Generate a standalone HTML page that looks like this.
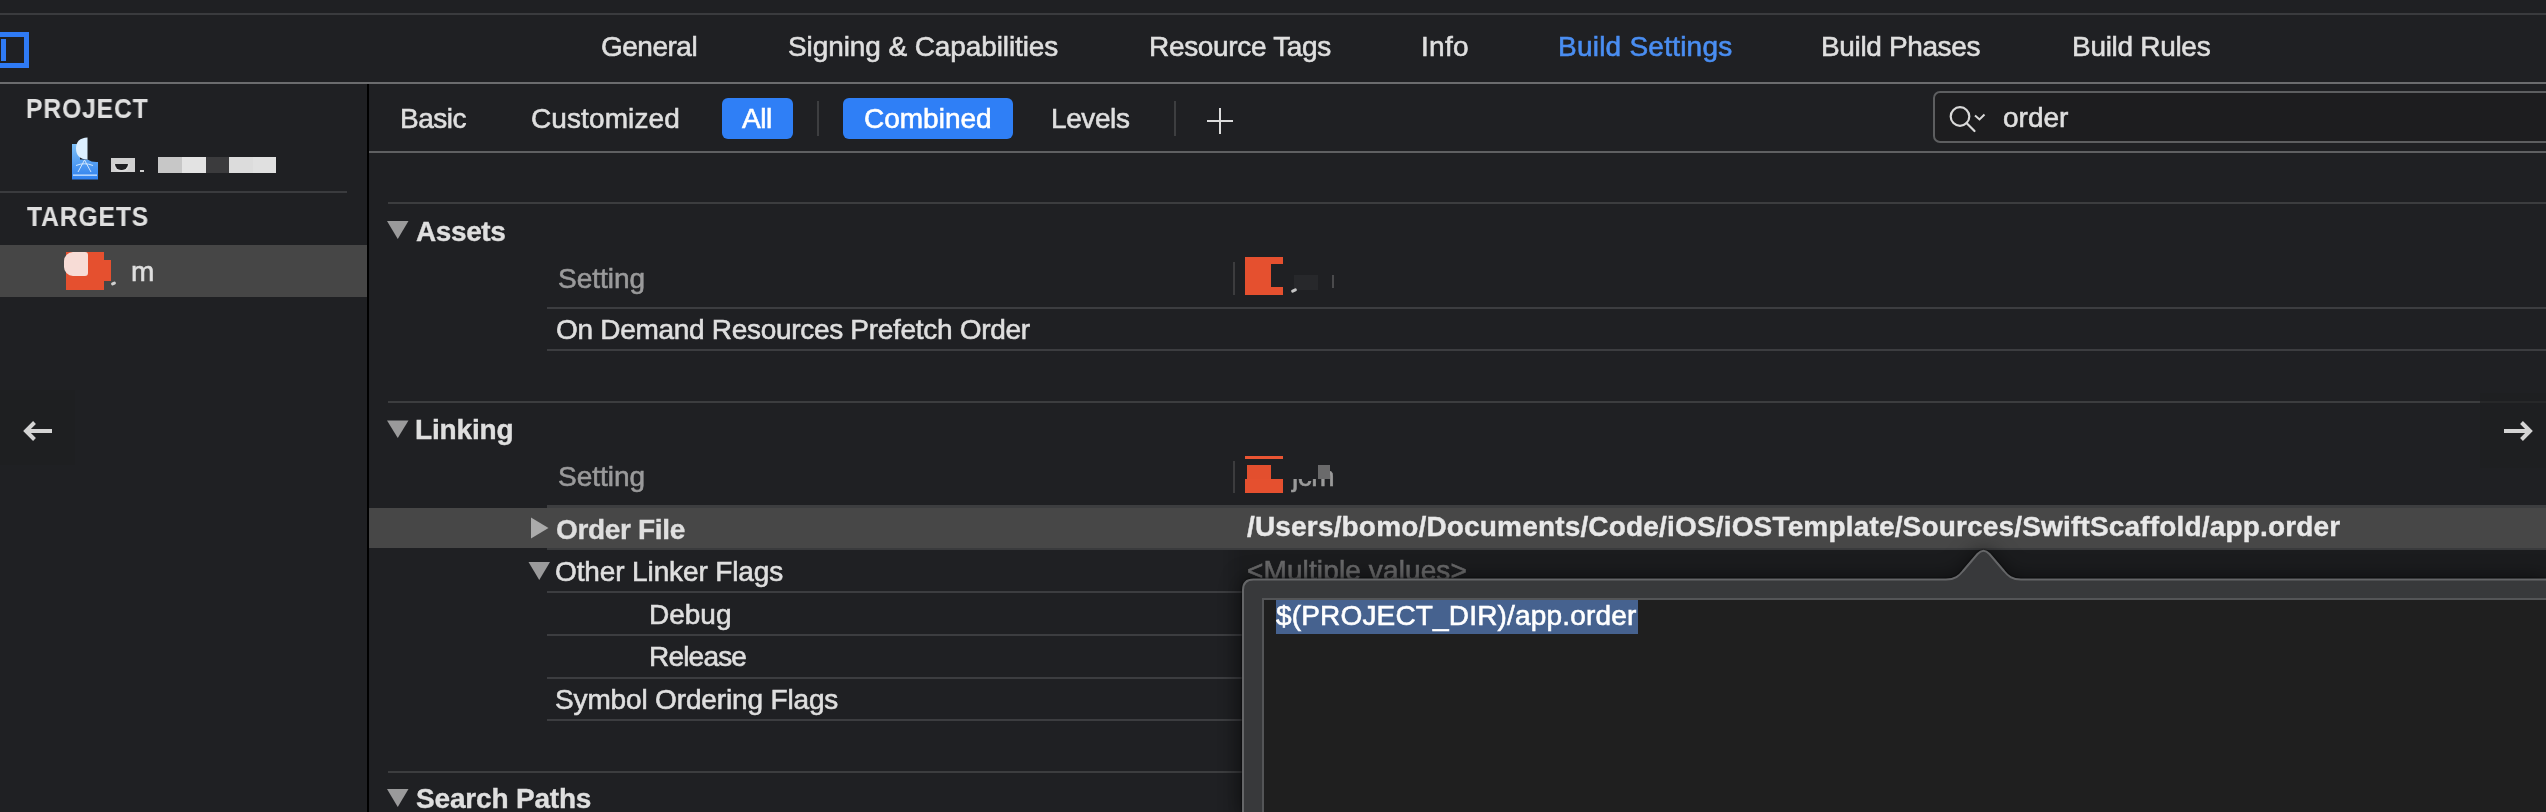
<!DOCTYPE html>
<html><head><meta charset="utf-8">
<style>
html,body{margin:0;padding:0;}
body{width:2546px;height:812px;overflow:hidden;background:#1f2023;position:relative;font-family:"Liberation Sans",sans-serif;}
.a{position:absolute;}
.t{position:absolute;font-size:28px;line-height:28px;white-space:pre;color:#dfdfdf;will-change:transform;-webkit-text-stroke:0.6px currentColor;}
.b{-webkit-text-stroke:0.4px currentColor;}
.t.b{font-weight:700;}
.ln{position:absolute;height:2px;}
</style></head><body>
<!-- top line -->
<div class="ln" style="left:0;top:13px;width:2546px;background:#3a3b3e"></div>
<!-- blue sidebar icon -->
<div class="a" style="left:-5px;top:32px;width:24px;height:26px;border:5px solid #2f7bf5"></div>
<div class="a" style="left:1px;top:39px;width:5px;height:22px;background:#2f7bf5"></div>

<!-- tabs -->
<div class="t" style="left:601px;top:33px;letter-spacing:-0.5px">General</div>
<div class="t" style="left:788px;top:33px;letter-spacing:-0.1px">Signing &amp; Capabilities</div>
<div class="t" style="left:1149px;top:33px;letter-spacing:-0.33px">Resource Tags</div>
<div class="t" style="left:1421px;top:33px;letter-spacing:0.33px">Info</div>
<div class="t" style="left:1558px;top:33px;color:#4a8ef2;letter-spacing:0.23px">Build Settings</div>
<div class="t" style="left:1821px;top:33px;letter-spacing:-0.36px">Build Phases</div>
<div class="t" style="left:2072px;top:33px;letter-spacing:-0.3px">Build Rules</div>

<!-- line under tabs -->
<div class="ln" style="left:0;top:82px;width:2546px;background:#6b6c6e"></div>

<!-- sidebar -->
<div class="a" style="left:367px;top:84px;width:2px;height:728px;background:#000"></div>
<div class="t b" style="left:26px;top:95px;letter-spacing:1px;transform:scaleX(0.88);transform-origin:0 0;-webkit-text-stroke:0.1px currentColor">PROJECT</div>
<div class="ln" style="left:0;top:191px;width:347px;background:#3a3b3e"></div>
<div class="t b" style="left:27px;top:203px;letter-spacing:1px;transform:scaleX(0.88);transform-origin:0 0;-webkit-text-stroke:0.1px currentColor">TARGETS</div>
<div class="a" style="left:0;top:245px;width:367px;height:52px;background:#464646"></div>
<div class="t" style="left:131px;top:258px">m</div>

<!-- nav arrows -->


<!-- filter bar -->
<div class="t" style="left:400px;top:105px;letter-spacing:-0.5px">Basic</div>
<div class="t" style="left:531px;top:105px;letter-spacing:0.1px">Customized</div>
<div class="a" style="left:722px;top:98px;width:71px;height:41px;border-radius:6px;background:#2f7ff6"></div>
<div class="t" style="left:742px;top:105px;color:#fff;letter-spacing:-0.5px">All</div>
<div class="a" style="left:817px;top:101px;width:2px;height:35px;background:#3d3e40"></div>
<div class="a" style="left:843px;top:98px;width:170px;height:41px;border-radius:6px;background:#2f7ff6"></div>
<div class="t" style="left:864px;top:105px;color:#fff">Combined</div>
<div class="t" style="left:1051px;top:105px;letter-spacing:-0.4px">Levels</div>
<div class="a" style="left:1174px;top:101px;width:2px;height:35px;background:#3d3e40"></div>
<div class="a" style="left:1207px;top:120px;width:26px;height:2px;background:#dcdcdc"></div>
<div class="a" style="left:1219px;top:108px;width:2px;height:26px;background:#dcdcdc"></div>

<!-- search field -->
<div class="a" style="left:1933px;top:91px;width:640px;height:48px;border:2px solid #5d5e60;border-radius:7px;background:#1d1d1f"></div>
<div class="t" style="left:2003px;top:104px">order</div>

<!-- line under filter -->
<div class="ln" style="left:369px;top:151px;width:2177px;background:#5f6062"></div>

<!-- content -->
<div class="ln" style="left:388px;top:202px;width:2158px;background:#3c3d3f"></div>
<div class="t b" style="left:416px;top:218px;letter-spacing:-0.4px">Assets</div>
<div class="t" style="left:558px;top:265px;color:#9a9a9b">Setting</div>
<div class="a" style="left:1233px;top:262px;width:2px;height:33px;background:#3c3c3e"></div>
<div class="ln" style="left:547px;top:307px;width:1999px;background:#3c3d40"></div>
<div class="t" style="left:556px;top:316px;letter-spacing:-0.3px">On Demand Resources Prefetch Order</div>
<div class="ln" style="left:547px;top:349px;width:1999px;background:#3c3d40"></div>

<div class="ln" style="left:388px;top:401px;width:2158px;background:#3c3d3f"></div>
<div class="a" style="left:0;top:390px;width:75px;height:75px;background:rgba(30,31,33,0.7)"></div>
<div class="a" style="left:2480px;top:393px;width:66px;height:75px;background:rgba(30,31,33,0.7)"></div>
<div class="t b" style="left:415px;top:416px;letter-spacing:-0.15px">Linking</div>
<div class="t" style="left:558px;top:463px;color:#9a9a9b">Setting</div>
<div class="a" style="left:1233px;top:461px;width:2px;height:32px;background:#3c3c3e"></div>

<!-- order file row -->
<div class="a" style="left:369px;top:508px;width:2177px;height:40px;background:#474747"></div>
<div class="a" style="left:547px;top:505px;width:1999px;height:3px;background:#3d3e40"></div>
<div class="a" style="left:547px;top:548px;width:1999px;height:2px;background:#3a3b3d"></div>
<div class="t b" style="left:556px;top:516px;letter-spacing:-0.33px">Order File</div>
<div class="t b" style="left:1247px;top:513px;color:#e8e8e8;letter-spacing:0.17px">/Users/bomo/Documents/Code/iOS/iOSTemplate/Sources/SwiftScaffold/app.order</div>

<div class="t" style="left:555px;top:558px;letter-spacing:-0.12px">Other Linker Flags</div>
<div class="ln" style="left:547px;top:591px;width:700px;background:#3c3d40"></div>
<div class="t" style="left:649px;top:601px">Debug</div>
<div class="ln" style="left:547px;top:634px;width:700px;background:#3c3d40"></div>
<div class="t" style="left:649px;top:643px;letter-spacing:-0.8px">Release</div>
<div class="ln" style="left:547px;top:677px;width:700px;background:#3c3d40"></div>
<div class="t" style="left:555px;top:686px;letter-spacing:-0.15px">Symbol Ordering Flags</div>
<div class="ln" style="left:547px;top:719px;width:700px;background:#3c3d40"></div>
<div class="ln" style="left:388px;top:771px;width:860px;background:#3c3d3f"></div>
<div class="t b" style="left:416px;top:785px;letter-spacing:-0.18px">Search Paths</div>


<!-- disclosure triangles & arrows -->
<svg class="a" style="left:0;top:0" width="2546" height="812" viewBox="0 0 2546 812">
<polygon points="387,221 408.5,221 397.75,239" fill="#9a9a9b"/>
<polygon points="387,420.5 408.5,420.5 397.75,438" fill="#9a9a9b"/>
<polygon points="387,789 408.5,789 397.75,807" fill="#9a9a9b"/>
<polygon points="531,517.5 548.5,528 531,538.5" fill="#ababab"/>
<polygon points="528.5,562 550,562 539.25,580" fill="#9a9a9b"/>
<g stroke="#d4d4d4" stroke-width="4" fill="none" stroke-linecap="butt">
<path d="M52 431 H27"/><path d="M34.5 422.5 L26 431 L34.5 439.5"/>
<path d="M2504 431 H2529"/><path d="M2521.5 422.5 L2530 431 L2521.5 439.5"/>
</g>
<g stroke="#d9d9d9" stroke-width="2.2" fill="none">
<circle cx="1960" cy="116.5" r="9.3"/>
<path d="M1966.5 123 L1974.5 131" stroke-linecap="round"/>
<path d="M1975 115.5 L1979.5 119.5 L1984.5 114.5" stroke-width="2"/>
</g>
</svg>
<!-- project icon -->
<svg class="a" style="left:60px;top:130px" width="40" height="55" viewBox="60 130 40 55">
<defs><linearGradient id="pg" x1="0" y1="0" x2="0" y2="1"><stop offset="0" stop-color="#7dc0f7"/><stop offset="1" stop-color="#2f80ee"/></linearGradient></defs>
<path d="M72 144 H80 V159.5 H87.5 Q92 162.5 98 162 V179.5 H72 Z" fill="url(#pg)"/>
<path d="M87.5 137.5 V159.5 Q76 159 76 148.5 Q76 138 87.5 137.5 Z" fill="#dcefff"/>

<rect x="73" y="174.5" width="24" height="1.3" fill="#cfe6ff"/>
<g stroke="#e8f4ff" stroke-width="1" fill="none" opacity="0.85"><path d="M78 172 L84.5 160 L91 172"/><path d="M76 165.5 Q84.5 162 93 165.5"/></g>
</svg>
<!-- blurred project name -->
<div class="a" style="left:111px;top:158px;width:24px;height:14px;background:#d0d0d0"></div>
<div class="a" style="left:113px;top:164px;width:13px;height:6px;border-radius:0 0 8px 8px;border:2.5px solid #dadada;border-top:none;background:#1f2023"></div>
<div class="a" style="left:140px;top:170px;width:4px;height:2px;background:#cfcfcf"></div>
<div class="a" style="left:158px;top:157px;width:24px;height:16px;background:#c7c7c7"></div>
<div class="a" style="left:182px;top:157px;width:24px;height:16px;background:#e3e3e3"></div>
<div class="a" style="left:206px;top:157px;width:23px;height:16px;background:#3b3b3d"></div>
<div class="a" style="left:229px;top:157px;width:24px;height:16px;background:#dcdcdc"></div>
<div class="a" style="left:253px;top:157px;width:23px;height:16px;background:#e0e0e0"></div>
<!-- target icon -->
<div class="a" style="left:66px;top:252px;width:38px;height:38px;background:#e5502f"></div>
<div class="a" style="left:104px;top:260px;width:7px;height:21px;background:#e5502f"></div>
<div class="a" style="left:64px;top:252px;width:24px;height:24px;border-radius:9px 3px 3px 9px;background:#f7dcd6"></div>
<div class="a" style="left:111px;top:282px;width:5px;height:3px;border-radius:2px;background:#d0d0d0;transform:rotate(-25deg)"></div>
<!-- red icons in setting rows -->
<div class="a" style="left:1245px;top:257px;width:38px;height:38px;background:#e5502f"></div>
<div class="a" style="left:1271px;top:264px;width:12px;height:23px;background:#1f2023"></div>
<div class="a" style="left:1294px;top:275px;width:24px;height:15px;background:#27282b"></div>
<div class="a" style="left:1291px;top:289px;width:6px;height:3px;border-radius:2px;background:#c4c4c4;transform:rotate(-25deg)"></div>
<div class="a" style="left:1332px;top:275px;width:2px;height:13px;background:#4a4a4c"></div>
<div class="a" style="left:1245px;top:456px;width:38px;height:3px;background:#ea5533"></div>
<div class="a" style="left:1247px;top:465px;width:24px;height:14px;background:#e34f2e"></div>
<div class="a" style="left:1245px;top:479px;width:38px;height:14px;background:#e5502f"></div>
<div class="t" style="left:1292px;top:463px;color:#9a9a9a;letter-spacing:-0.5px">jcm</div>
<div class="a" style="left:1286px;top:460px;width:32px;height:19px;background:#1f2023"></div>
<div class="a" style="left:1318px;top:465px;width:12px;height:14px;background:#6a6a6b"></div>

<!-- popover -->
<div class="a" style="left:1243px;top:550px;width:1303px;height:30px;background:rgba(0,0,0,0.12)"></div>
<div class="a" style="left:1223px;top:550px;width:20px;height:262px;background:linear-gradient(90deg,rgba(0,0,0,0),rgba(0,0,0,0.12))"></div>

<div class="t" style="left:1247px;top:557px;color:#6a6a6b;letter-spacing:0.12px">&lt;Multiple values&gt;</div>
<svg class="a" style="left:0;top:0;filter:drop-shadow(0 0 1px rgba(0,0,0,0.9)) drop-shadow(0 0 10px rgba(0,0,0,0.5))" width="2546" height="812" viewBox="0 0 2546 812">
<path d="M1243 830 L1243 590 Q1243 579.5 1253.5 579.5 L1946 579.5 C1955 579.5 1959 576 1963 571 L1977.5 554 Q1983.5 547.5 1989.5 554 L2004 571 C2008 576 2012 579.5 2021 579.5 L2560 579.5 L2560 830 Z" fill="#38393b" stroke="#656668" stroke-width="2"/>
<rect x="1263" y="599" width="1300" height="240" fill="#1f1f1f" stroke="#545557" stroke-width="2"/>
</svg>
<div class="a" style="left:1276px;top:600px;width:362px;height:34px;background:#46628f"></div>
<div class="t" style="left:1276px;top:602px;color:#fff;letter-spacing:0.17px">$(PROJECT_DIR)/app.order</div>
</body></html>
